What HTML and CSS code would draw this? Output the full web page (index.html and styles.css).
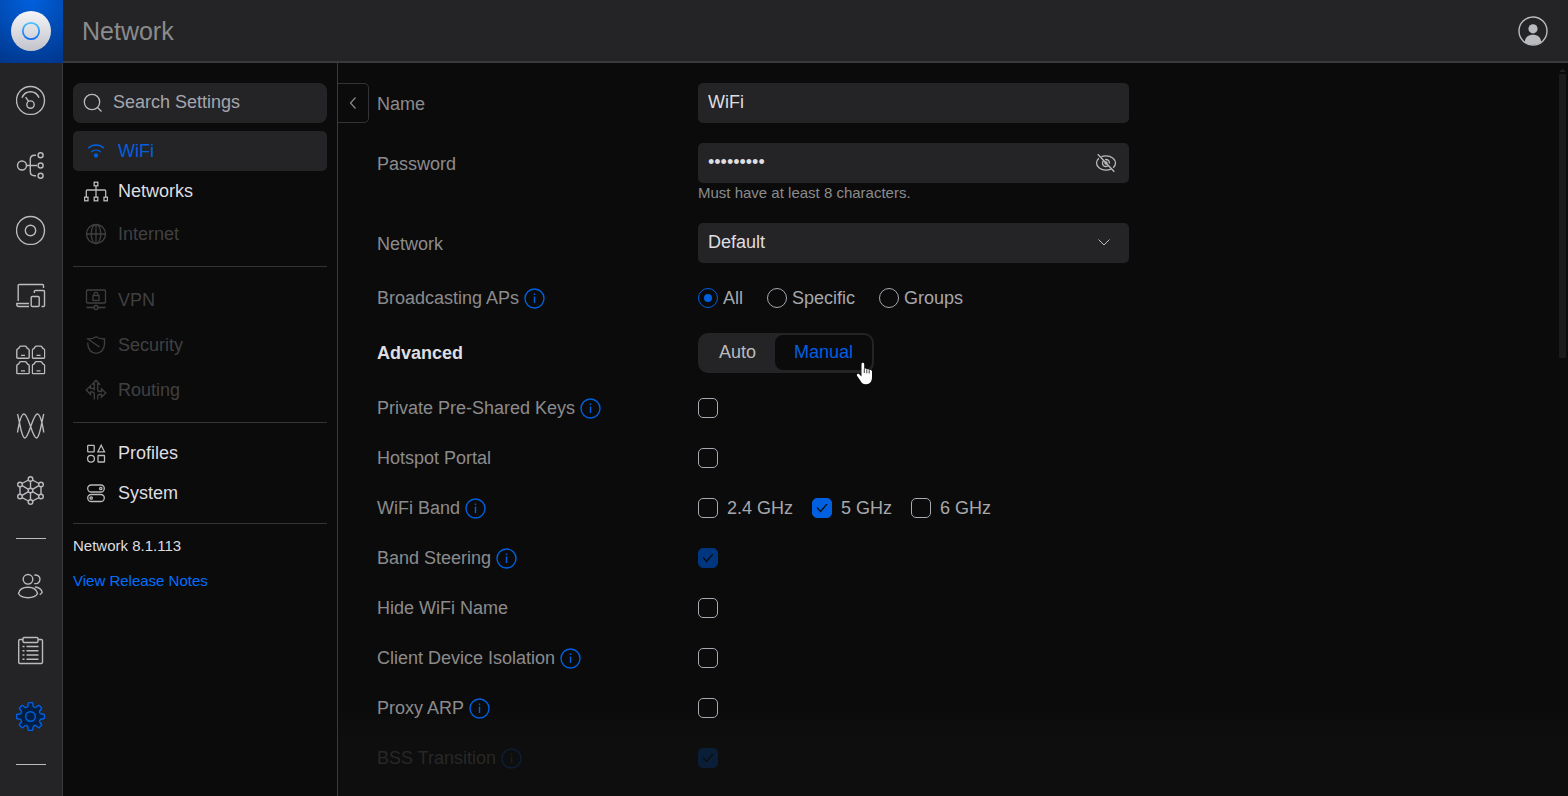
FILE: index.html
```html
<!DOCTYPE html>
<html lang="en">
<head>
<meta charset="utf-8">
<title>Network – WiFi Settings</title>
<link rel="stylesheet" href="styles.css">
</head>
<body>
<svg class="defs" aria-hidden="true">
  <symbol id="info" viewBox="0 0 21 21"><circle cx="10.5" cy="10.5" r="9.5"/><path d="M10.5 8.500v6.500M10.5 5.500v1.400"/></symbol>
  <symbol id="port" viewBox="0 0 14 14"><path d="M.8 12.200V5.200q0-1 1-1.400l.8-.4L3.600 1.900q.4-.8 1.300-.8h4.200q.9 0 1.300.8l1 1.500.8.4q1 .4 1 1.400v7q0 1-1 1H1.800q-1 0-1-1zM5 10.400h4"/></symbol>
</svg>
<header class="topbar">
  <a class="logo" href="#" aria-label="Home">
    <svg viewBox="0 0 40 40" aria-hidden="true">
      <defs>
        <linearGradient id="disc" x1="0" y1="0" x2="0" y2="1"><stop offset="0" stop-color="#f6f6f8"/><stop offset="1" stop-color="#c2c3cb"/></linearGradient>
        <linearGradient id="ring" x1="0" y1="0" x2="0" y2="1"><stop offset="0" stop-color="#4cc0ff"/><stop offset="1" stop-color="#0a6cf5"/></linearGradient>
      </defs>
      <circle cx="20" cy="20" r="20" fill="url(#disc)"/>
      <circle cx="20" cy="20" r="8.200" fill="none" stroke="url(#ring)" stroke-width="1.800"/>
    </svg>
  </a>
  <h1 class="title">Network</h1>
  <button class="account" type="button" aria-label="Account">
    <svg viewBox="0 0 30 30" aria-hidden="true"><circle cx="15" cy="15" r="14" fill="none" stroke="#babbbe" stroke-width="1.400"/><circle cx="15" cy="12.800" r="4.600" fill="#babbbe" stroke="none"/><path d="M6.800 26c.4-5 3.600-7.200 8.200-7.200s7.800 2.200 8.200 7.200c-4.500 3.500-12 3.500-16.400 0z" fill="#babbbe" stroke="none"/></svg>
  </button>
</header>
<div class="shell">
  <nav class="rail" aria-label="Main">
    <a class="rail-item" href="#" aria-label="Dashboard"><svg viewBox="0 0 30 30"><circle cx="14.500" cy="15.500" r="14"/><path d="M6 12.800C9.200 4.800 19.800 4.800 23 12.800M9.600 12.200l3 4.200"/><circle cx="14.500" cy="19.600" r="3.700"/></svg></a>
    <a class="rail-item" href="#" aria-label="Topology"><svg viewBox="0 0 30 30"><circle cx="6" cy="15.500" r="4.500"/><path d="M10.500 15.500H21M20 5.200h-1.500q-4.200 0-4.200 4.200v12.200q0 4.200 4.200 4.200H20"/><circle cx="24.600" cy="5.200" r="2.500"/><circle cx="24.600" cy="15.500" r="2.500"/><circle cx="24.600" cy="25.800" r="2.500"/></svg></a>
    <a class="rail-item" href="#" aria-label="Devices"><svg viewBox="0 0 30 30"><circle cx="14.500" cy="15.500" r="14"/><circle cx="14.500" cy="15.500" r="5.200"/></svg></a>
    <a class="rail-item" href="#" aria-label="Clients"><svg viewBox="0 0 30 30"><path d="M2.200 21V5.500q0-1 1-1H26.500q1 0 1 1V8M18.300 13v-1.500q0-1 1-1h8.200q1 0 1 1v14q0 1-1 1H25.500M13 23.500H.8v1q0 2 2 2H13"/><rect x="15.200" y="16.500" width="8" height="10" rx="1"/></svg></a>
    <a class="rail-item" href="#" aria-label="Ports"><svg viewBox="0 0 30 30"><use href="#port" x="0" y="0" width="14" height="14"/><use href="#port" x="15.500" y="0" width="14" height="14"/><use href="#port" x="0" y="15.500" width="14" height="14"/><use href="#port" x="15.500" y="15.500" width="14" height="14"/></svg></a>
    <a class="rail-item" href="#" aria-label="Radios"><svg viewBox="0 0 30 30"><path d="M1.500 22.500C3.500 10 5.500 4 8 4c4.600 0 8.200 24 12.500 24C24 28 26 9 27.800 4M27.800 22.500C25.800 10 23.800 4 21.300 4c-4.600 0-8.200 24-12.500 24C5.300 28 3.300 9 1.500 4"/></svg></a>
    <a class="rail-item" href="#" aria-label="Insights"><svg viewBox="0 0 30 30"><path d="M12.500 5 6 8.500M16.500 5 23 8.500M25 12v7M4 12v7M6 22.700l6.500 3.300M23 22.700 16.500 26M14.500 6.400v6.800M14.500 18v6.600M6.200 10.700l6.200 3.600M22.800 10.700l-6.200 3.600M6.200 20.300l6.200-3.600M22.800 20.300l-6.200-3.600"/><circle cx="14.500" cy="4" r="2.300"/><circle cx="25" cy="9.500" r="2.300"/><circle cx="25" cy="21.500" r="2.300"/><circle cx="14.500" cy="27" r="2.300"/><circle cx="4" cy="21.500" r="2.300"/><circle cx="4" cy="9.500" r="2.300"/><circle cx="14.500" cy="15.500" r="2.300"/></svg></a>
    <hr class="rail-rule">
    <a class="rail-item" href="#" aria-label="Admins"><svg viewBox="0 0 30 30"><circle cx="12" cy="8.300" r="4.800"/><path d="M18.300 4.300c2-1 5.700.4 5.700 4s-3.700 5-5.700 4M2.500 22.500c.8-4.200 4.600-6.300 9.500-6.300s8.700 2.100 9.500 6.300c-1.500 2.900-5 4.200-9.500 4.200s-8-1.300-9.500-4.200zM18.800 16c3.600.3 6.600 2 7.400 5.300-.5 1-1.300 1.800-2.500 2.400"/></svg></a>
    <a class="rail-item" href="#" aria-label="System log"><svg viewBox="0 0 30 30"><path d="M7 3.500H4q-1.300 0-1.300 1.300v21.400q0 1.300 1.300 1.300h21.200q1.300 0 1.300-1.300V4.800q0-1.300-1.300-1.300H22M10.500 10.500H22.500M10.500 14.800H22.500M10.500 19H22.500M10.500 23.300H22.500M6.500 10.500h2M6.500 14.800h2M6.500 19h2M6.500 23.300h2"/><rect x="7" y="1.500" width="15" height="5" rx="1"/></svg></a>
    <a class="rail-item active" href="#" aria-label="Settings" aria-current="page"><svg viewBox="0 0 30 30"><defs><path id="tooth" d="M-2.700-10.100-2.300-13.200Q-2.200-13.900-1.500-13.900H1.500Q2.200-13.900 2.300-13.200L2.700-10.100Q4-8.600 5.230-9.050"/></defs><g transform="translate(14.500 15.500)"><circle class="hub" r="10"/><g class="teeth"><use href="#tooth"/><use href="#tooth" transform="rotate(45)"/><use href="#tooth" transform="rotate(90)"/><use href="#tooth" transform="rotate(135)"/><use href="#tooth" transform="rotate(180)"/><use href="#tooth" transform="rotate(225)"/><use href="#tooth" transform="rotate(270)"/><use href="#tooth" transform="rotate(315)"/></g><circle r="4.800"/></g></svg></a>
    <hr class="rail-rule">
  </nav>
  <aside class="side">
    <label class="search">
      <svg viewBox="0 0 20 20" aria-hidden="true"><circle cx="9" cy="9" r="7.700"/><path d="M14.500 14.500l4 4"/></svg>
      <input type="text" placeholder="Search Settings" aria-label="Search Settings">
    </label>
    <nav class="menu" aria-label="Settings">
      <a class="item selected" href="#" aria-current="page"><svg viewBox="0 0 24 24"><path d="M4 9.200C8.500 4.900 15.500 4.900 20 9.200M7.200 13c2.800-2.600 6.800-2.600 9.600 0"/><circle cx="12" cy="16.500" r="1.500" fill="currentColor"/></svg>WiFi</a>
      <a class="item" href="#"><svg viewBox="0 0 24 24"><path d="M12 7v11M2.300 18v-6q0-1 1-1h17.400q1 0 1 1v6"/><rect x="10.200" y="3.200" width="3.600" height="3.600"/><rect x=".6" y="18.200" width="3.400" height="3.600"/><rect x="10.200" y="18.200" width="3.600" height="3.600"/><rect x="20" y="18.200" width="3.400" height="3.600"/></svg>Networks</a>
      <a class="item off" href="#" aria-disabled="true"><svg viewBox="0 0 24 24"><circle cx="12" cy="12" r="9.500"/><ellipse cx="12" cy="12" rx="4.800" ry="9.500"/><path d="M12 2.500v19M2.500 12h19"/></svg>Internet</a>
      <hr>
      <a class="item off" href="#" aria-disabled="true"><svg viewBox="0 0 24 24"><rect x="2.500" y="2" width="19" height="13" rx="1"/><rect x="9" y="7.500" width="6" height="5"/><path d="M10.200 7.500V6q0-1.700 1.800-1.700T13.800 6v1.500M2.500 19.500H10M14 19.500h7.500"/><circle cx="12" cy="19.500" r="2"/></svg>VPN</a>
      <a class="item off" href="#" aria-disabled="true"><svg viewBox="0 0 24 24"><path d="M3.800 9.500V11c0 5.500 4 9.300 8.300 9.300s8.400-3.800 8.400-9.300V6c-3 0-6-.7-8.400-2.300C9.800 5.300 7 6 3.900 6L15.500 14"/></svg>Security</a>
      <a class="item off" href="#" aria-disabled="true"><svg viewBox="0 0 24 24"><path d="M10.300 21.500v-5.200q0-2.500-2.500-2.500H6.500v2.700L2.200 12l4.300-4.300v2.700h1.300q1.300 0 2.500 1V6H8.500L12 2.200 15.500 6h-1.800v5.500q0 2 2 2h1.800v-2.700l4.300 4.200-4.300 4.200v-2.700H15.700q-2 0-2 2v3"/></svg>Routing</a>
      <hr>
      <a class="item" href="#"><svg viewBox="0 0 24 24"><rect x="3.700" y="4.300" width="6.500" height="6.500" rx=".6"/><path d="M17.200 4.300l3.300 6.500h-6.600z"/><circle cx="7" cy="17.800" r="3.400"/><rect x="14" y="14.500" width="6.500" height="6.500" rx=".6"/></svg>Profiles</a>
      <a class="item" href="#"><svg viewBox="0 0 24 24"><rect x="3.700" y="4" width="16.600" height="7" rx="3.500"/><rect x="3.700" y="13.500" width="16.600" height="7" rx="3.500"/><circle cx="16.800" cy="7.500" r="1.200"/><circle cx="7.200" cy="17" r="1.200"/></svg>System</a>
      <hr>
    </nav>
    <p class="version">Network 8.1.113</p>
    <a class="notes" href="#">View Release Notes</a>
  </aside>
  <main class="content">
    <button class="collapse" type="button" aria-label="Collapse menu"><svg viewBox="0 0 10 14" aria-hidden="true"><path d="M7.500 1.500 2.500 7l5 5.500"/></svg></button>
    <form class="form">
      <div class="row field"><label class="label" for="name">Name</label><input class="box" id="name" type="text" value="WiFi"></div>
      <div class="row field"><label class="label" for="pass">Password</label>
        <div class="stack">
          <div class="with-icon"><input class="box" id="pass" type="password" value="password1" aria-describedby="hint">
            <button class="eye" type="button" aria-label="Show password"><svg viewBox="0 0 22 20"><path d="M3.800 5.300C2.400 6.700 1.500 8.300 1.500 10c0 4 4.300 7.200 9.500 7.200 1.900 0 3.600-.4 5-1.200M6.500 3.700C7.900 3 9.400 2.800 11 2.800c5.200 0 9.500 3.200 9.500 7.200 0 1.800-.9 3.500-2.300 4.700M8.700 7.500C7.900 8.100 7.500 9 7.500 10c0 2 1.600 3.500 3.500 3.500.9 0 1.700-.3 2.300-.9M10 6.600c2.600-.6 4.500 1.200 4.500 3.800M2.800 1.300l16.500 17.400"/><circle cx="11" cy="10" r="1"/></svg></button></div>
          <p class="hint" id="hint">Must have at least 8 characters.</p>
        </div></div>
      <div class="row field"><label class="label" for="net">Network</label>
        <div class="with-icon"><select class="box" id="net"><option>Default</option></select><svg class="chevron" viewBox="0 0 14 10" aria-hidden="true"><path d="M1.500 1.500 7 7l5.500-5.500"/></svg></div></div>
      <div class="row aps"><span class="label" id="aps">Broadcasting APs<svg class="info"><use href="#info"/></svg></span>
        <div class="options radios" role="radiogroup" aria-labelledby="aps"><label><input type="radio" name="aps" checked>All</label><label><input type="radio" name="aps">Specific</label><label><input type="radio" name="aps">Groups</label></div></div>
      <div class="row"><strong class="label strong">Advanced</strong>
        <div class="segment"><button type="button" aria-pressed="false">Auto</button><button type="button" class="on" aria-pressed="true">Manual</button>
          <svg class="pointer" viewBox="0 0 18 24" aria-hidden="true"><path d="M5.500 2.200c0-2 2.700-2 2.700 0v5c.5-1 2.300-.8 2.500.4.700-.8 2.300-.5 2.400.7.900-.7 2.700-.3 2.900 1.200v5.300c0 4.600-2 7.500-6 7.500-3.300 0-4.600-1.500-5.700-3.700L1 13.800c-.7-1.600 1-2.600 2.200-1.500l2.300 2.200z" fill="#fff" stroke="none"/><path d="M8.300 7v4M10.800 7.500v3.800M13.200 8.300v3.200" fill="none" stroke="#0b0b0c" stroke-width=".8"/></svg></div></div>
      <div class="checks">
        <div class="row"><label class="label" for="ppsk">Private Pre-Shared Keys<svg class="info"><use href="#info"/></svg></label><input id="ppsk" type="checkbox"></div>
        <div class="row"><label class="label" for="portal">Hotspot Portal</label><input id="portal" type="checkbox"></div>
        <div class="row"><span class="label" id="band">WiFi Band<svg class="info"><use href="#info"/></svg></span>
          <div class="options" role="group" aria-labelledby="band"><label><input type="checkbox">2.4 GHz</label><label><input type="checkbox" checked>5 GHz</label><label><input type="checkbox">6 GHz</label></div></div>
        <div class="row"><label class="label" for="steer">Band Steering<svg class="info"><use href="#info"/></svg></label><input id="steer" type="checkbox" checked disabled></div>
        <div class="row"><label class="label" for="hide">Hide WiFi Name</label><input id="hide" type="checkbox"></div>
        <div class="row"><label class="label" for="iso">Client Device Isolation<svg class="info"><use href="#info"/></svg></label><input id="iso" type="checkbox"></div>
        <div class="row"><label class="label" for="arp">Proxy ARP<svg class="info"><use href="#info"/></svg></label><input id="arp" type="checkbox"></div>
        <div class="row faded"><label class="label" for="bss">BSS Transition<svg class="info"><use href="#info"/></svg></label><input id="bss" type="checkbox" checked></div>
      </div>
    </form>
    <div class="scroll" aria-hidden="true"><i class="scroll-up"></i><i class="thumb"></i></div>
  </main>
</div>
</body>
</html>
```
FILE: styles.css
```css
* { box-sizing: border-box; }
body {
  margin: 0;
  height: 100vh;
  overflow: hidden;
  display: flex;
  flex-direction: column;
  background: #0b0b0b;
  color: #8b8b8d;
  font: 18px/22px "Liberation Sans", Arial, sans-serif;
}
a { color: inherit; text-decoration: none; }
button, input, select { font: inherit; color: inherit; margin: 0; }
button { border: 0; padding: 0; background: none; cursor: pointer; }
svg { display: block; flex: none; fill: none; stroke: currentColor; }
hr { border: 0; margin: 0; height: 1px; }
p { margin: 0; }
.defs { position: absolute; width: 0; height: 0; }

/* Top bar */
.topbar {
  flex: none;
  display: flex;
  align-items: center;
  height: 63px;
  padding-right: 20px;
  background: #242426;
  border-bottom: 2px solid #3a3a3e;
}
.logo {
  align-self: flex-start;
  display: grid;
  place-items: center;
  width: 63px;
  height: 63px;
  padding: 0 2px 2px 0;
  background: radial-gradient(circle at 50% 0, #0061dd, #00368c 100%);
}
.logo svg { width: 40px; height: 40px; stroke: none; }
.title { flex: 1; margin: 0 0 0 19px; font-size: 25px; line-height: 30px; font-weight: 400; color: #8b8b8b; }
.account svg { width: 30px; height: 30px; }

/* Icon rail */
.shell { flex: 1; min-height: 0; display: flex; }
.rail {
  flex: none;
  width: 63px;
  padding-top: 5px;
  background: #242426;
  border-right: 1px solid #3a3a3e;
  color: #babbbe;
}
.rail-item { display: flex; justify-content: center; height: 65px; padding-top: 17px; }
.rail-item svg { width: 30px; height: 30px; stroke-width: 1.4; }
.active svg { stroke: #0060e0; }
.active .hub { stroke: none; fill: #001f47; }
.active .teeth { fill: #001f47; }
.rail-rule { width: 30px; margin: 15px 16px; background: #babbbe; }

/* Settings menu */
.side {
  flex: none;
  width: 275px;
  padding: 20px 10px;
  border-right: 1px solid #3a3a3e;
  color: #dedee0;
}
.search {
  display: flex;
  align-items: center;
  height: 40px;
  margin-bottom: 8px;
  padding: 0 10px;
  gap: 10px;
  border-radius: 8px;
  background: #242426;
  color: #babbbe;
}
.search svg { width: 20px; height: 20px; stroke-width: 1.3; }
.search input { flex: 1; min-width: 0; height: 38px; padding: 0 0 2px; border: 0; outline: 0; background: none; }
.search input::placeholder { color: #a5a6ad; opacity: 1; }
.item { display: flex; align-items: center; gap: 10px; height: 40px; padding-left: 11px; border-radius: 5px; }
.item svg { width: 24px; height: 24px; color: #babbbe; stroke-width: 1.3; }
.item.selected, .item.selected svg { color: #0060e0; }
.item.selected { background: #242426; }
.item.off { height: 45px; }
.item.off, .item.off svg { color: #404042; }
.menu hr { margin: 10px 0; background: #343438; }
.version, .notes { display: block; font-size: 15px; line-height: 20px; }
.version { margin: 12px 0 15px; }
.notes { color: #006fff; }

/* Form */
.content {
  position: relative;
  flex: 1;
  min-width: 0;
  display: flex;
  align-items: flex-start;
  padding-top: 20px;
  background: linear-gradient(to top, #0e0e0e 60px, #0b0b0b 90px);
}
.collapse {
  flex: none;
  display: grid;
  place-items: center;
  width: 31px;
  height: 40px;
  border: 1px solid #343438;
  border-left: 0;
  border-radius: 0 5px 5px 0;
}
.collapse svg { width: 10px; height: 14px; stroke-width: 1.2; }
.form { flex: 1; padding: 0 20px 0 8px; }
.row { display: grid; grid-template-columns: minmax(0, 321px) minmax(0, 431px); align-items: center; min-height: 40px; }
.field { align-items: start; margin-bottom: 20px; }
.label { display: flex; align-items: center; gap: 5px; line-height: 22px; }
.field .label { padding-top: 10px; }
.strong { color: #dedee0; }
.info { width: 21px; height: 21px; color: #0060e0; stroke-width: 1.4; }
.box {
  display: block;
  width: 100%;
  height: 40px;
  padding: 0 10px 2px;
  border: 0;
  border-radius: 5px;
  outline: 0;
  appearance: none;
  background: #242426;
  color: #dedee0;
}
.with-icon { position: relative; }
.eye, .chevron { position: absolute; top: 0; bottom: 0; margin: auto 0; color: #babbbe; }
.eye { right: 12px; }
.eye svg { width: 22px; height: 20px; stroke-width: 1.3; }
.chevron { right: 18px; width: 14px; height: 10px; pointer-events: none; }
.hint { font-size: 15px; line-height: 20px; }
.row.aps { margin: -5px 0 15px; }
.options { display: flex; align-items: center; gap: 19px; color: #a7a8ab; }
.options label { display: flex; align-items: center; gap: 9px; }
.options.radios { gap: 24px; }
.options.radios label { gap: 5px; }

input[type="checkbox"], input[type="radio"] {
  appearance: none;
  flex: none;
  display: grid;
  place-items: center;
  width: 20px;
  height: 20px;
  border: 1px solid #a7a8b0;
  border-radius: 5px;
}
input[type="radio"] { border-radius: 50%; }
input[type="radio"]:checked { border-color: #0060e0; }
input[type="radio"]:checked::after { content: ""; width: 8px; height: 8px; border-radius: 50%; background: #0060e0; }
input[type="checkbox"]:checked { border-color: #0060e0; background: #0060e0; }
input[type="checkbox"]:checked::after {
  content: "";
  width: 11px;
  height: 9px;
  background: #0b0b0c;
  clip-path: polygon(0 50%, 9% 40%, 36% 78%, 91% 0, 100% 8%, 37% 100%);
}
input[type="checkbox"]:disabled { border-color: #003680; background: #003680; }

.segment { position: relative; justify-self: start; display: flex; height: 40px; padding: 2px 2px 3px; border-radius: 10px; background: #242426; color: #babbbe; }
.segment button { padding: 0 19px 1px; border-radius: 8px; }
.segment .on { background: #0b0b0c; color: #0060e0; }
.pointer { position: absolute; right: 0; top: 29px; width: 18px; height: 24px; }
.checks { padding-top: 10px; }
.checks .row { min-height: 50px; }
.faded { opacity: 0.2; }

/* Scroll track */
.scroll { position: absolute; top: 6px; right: 2px; width: 7px; }
.scroll i { display: block; }
.scroll-up { height: 3px; margin-bottom: 2px; background: #242426; clip-path: polygon(50% 0, 100% 100%, 0 100%); }
.thumb { height: 284px; background: #1b1b1c; }
```
